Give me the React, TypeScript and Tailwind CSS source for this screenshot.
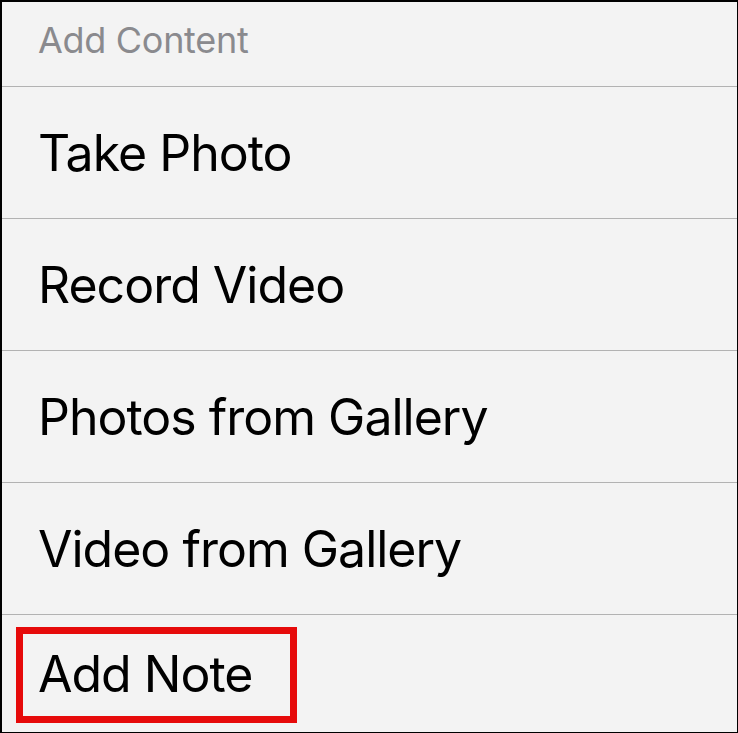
export default function App() {
  const rows = ["Take Photo", "Record Video", "Photos from Gallery", "Video from Gallery"];
  return (
    <div
      className="w-[738px] h-[733px] bg-[#f3f3f3] border-l-2 border-t-2 border-r border-b border-black flex flex-col overflow-hidden"
      style={{ fontFamily: "Inter, 'Noto Sans', sans-serif" }}
    >
      <div className="h-[85px] shrink-0 border-b border-[#b2b2b2] flex items-center pl-[36px] pb-[8px]">
        <span className="text-[36px] text-[#8a8a8e] leading-none tracking-[-0.3px]">Add Content</span>
      </div>
      {rows.map((r) => (
        <div key={r} className="h-[132px] shrink-0 border-b border-[#b2b2b2] flex items-center pl-[36px]">
          <span className="text-[50px] text-black leading-none tracking-[-1px]">{r}</span>
        </div>
      ))}
      <div className="relative flex-1 flex items-center pl-[36px]">
        <span className="text-[50px] text-black leading-none tracking-[-1px]">Add Note</span>
        <div className="absolute left-[14px] top-[12px] w-[281px] h-[96px] border-[7px] border-[#e60a0a]" />
      </div>
    </div>
  );
}
